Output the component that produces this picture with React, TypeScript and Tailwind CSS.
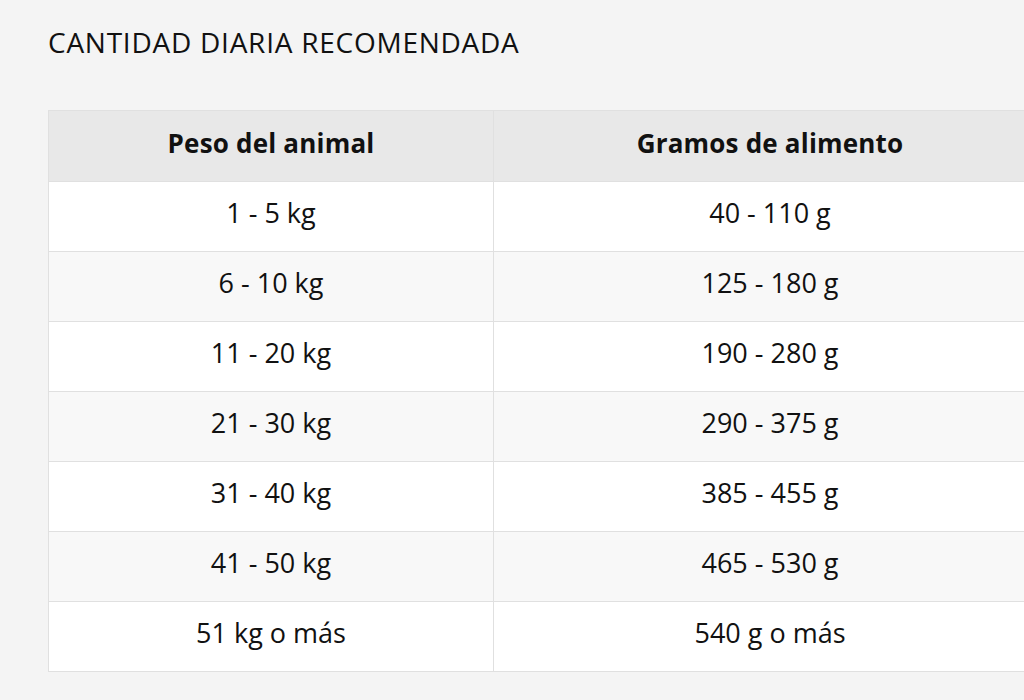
const rows = [
  ["1 - 5 kg", "40 - 110 g"],
  ["6 - 10 kg", "125 - 180 g"],
  ["11 - 20 kg", "190 - 280 g"],
  ["21 - 30 kg", "290 - 375 g"],
  ["31 - 40 kg", "385 - 455 g"],
  ["41 - 50 kg", "465 - 530 g"],
  ["51 kg o más", "540 g o más"],
]

export default function App() {
  return (
    <div
      className="min-h-[700px] w-[1024px] overflow-hidden bg-[#f4f4f4] pl-12 pt-[23px] text-[#111]"
      style={{ fontFamily: '"Open Sans", "Noto Sans", sans-serif' }}
    >
      <h2 className="text-[28px] leading-[38px] tracking-[0.75px]">CANTIDAD DIARIA RECOMENDADA</h2>

      <table className="mt-[49px] w-[999px] border-collapse border border-[#e0e0e0] text-center">
        <thead>
          <tr className="h-[71px] bg-[#e8e8e8]">
            <th className="w-[445px] border border-[#e0e0e0] pb-[6px] text-[26px] font-bold tracking-[0.2px]">Peso del animal</th>
            <th className="border border-[#e0e0e0] pb-[6px] text-[26px] font-bold tracking-[0.2px]">Gramos de alimento</th>
          </tr>
        </thead>
        <tbody>
          {rows.map((row, i) => (
            <tr key={i} className={`h-[70px] ${i % 2 === 1 ? "bg-[#f8f8f8]" : "bg-white"}`}>
              <td className="border border-[#e0e0e0] pb-[6px] text-[27px]">{row[0]}</td>
              <td className="border border-[#e0e0e0] pb-[6px] text-[27px]">{row[1]}</td>
            </tr>
          ))}
        </tbody>
      </table>
    </div>
  )
}
